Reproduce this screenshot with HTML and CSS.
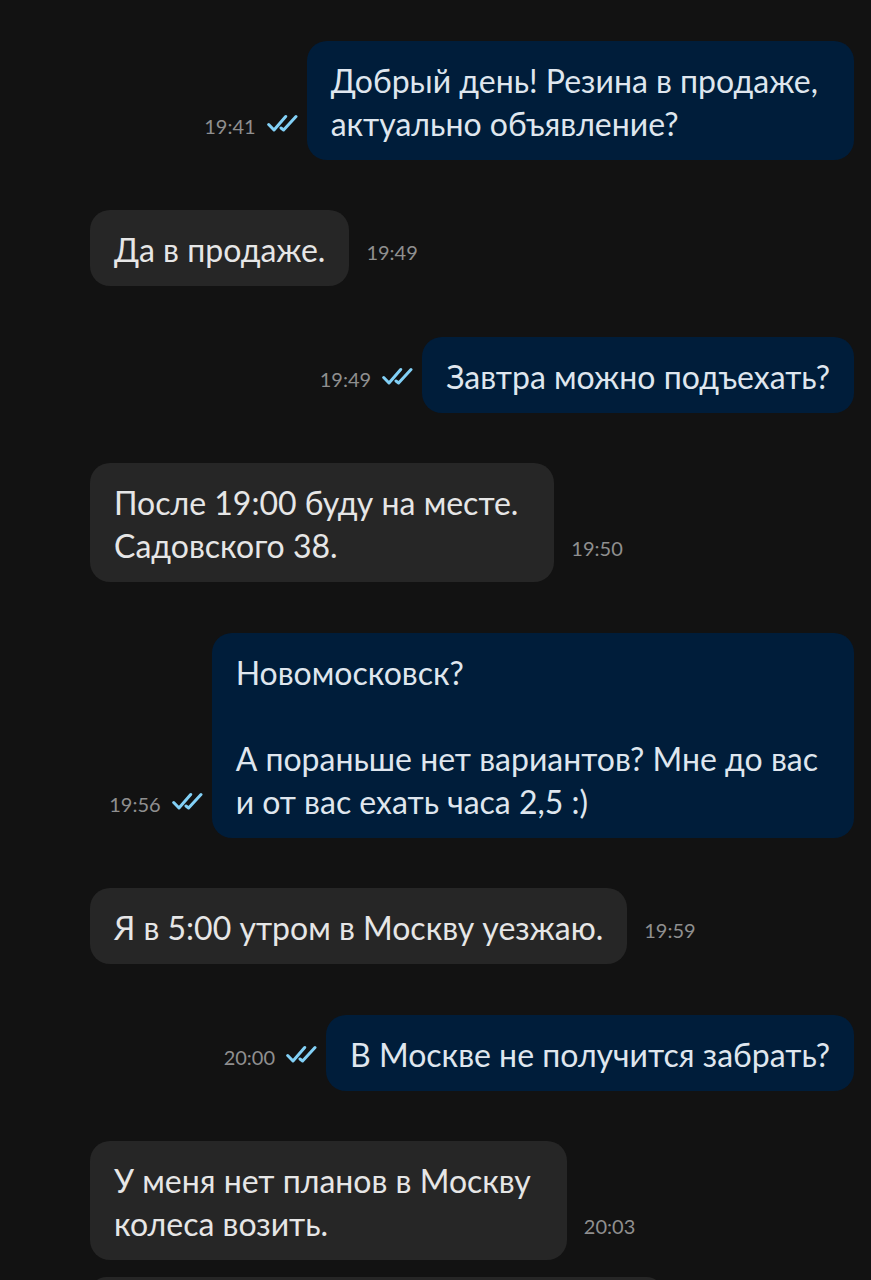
FILE: index.html
```html
<!DOCTYPE html>
<html lang="ru">
<head>
    <meta charset="UTF-8">
    <meta name="viewport" content="width=device-width, initial-scale=1.0">
    <title>Чат</title>
    <link rel="stylesheet" href="styles.css">
</head>
<body>
    <svg class="sprite" aria-hidden="true">
        <symbol id="read" viewBox="0 0 32 18">
            <path d="M2.7 10.5L8 16L19.7 2.5M15 14L17.6 16L30 2.5"/>
        </symbol>
    </svg>

    <main class="chat">
        <div class="message outgoing">
            <div class="meta"><time>19:41</time><svg class="read"><use href="#read"/></svg></div>
            <p class="bubble multiline">Добрый день! Резина в продаже,<br>актуально объявление?</p>
        </div>
        <div class="message incoming">
            <p class="bubble">Да в продаже.</p>
            <div class="meta"><time>19:49</time></div>
        </div>
        <div class="message outgoing">
            <div class="meta"><time>19:49</time><svg class="read"><use href="#read"/></svg></div>
            <p class="bubble">Завтра можно подъехать?</p>
        </div>
        <div class="message incoming">
            <p class="bubble multiline">После 19:00 буду на месте.<br>Садовского 38.</p>
            <div class="meta"><time>19:50</time></div>
        </div>
        <div class="message outgoing">
            <div class="meta"><time>19:56</time><svg class="read"><use href="#read"/></svg></div>
            <p class="bubble multiline">Новомосковск?<br><br>А пораньше нет вариантов? Мне до вас<br>и от вас ехать часа 2,5 :)</p>
        </div>
        <div class="message incoming">
            <p class="bubble">Я в 5:00 утром в Москву уезжаю.</p>
            <div class="meta"><time>19:59</time></div>
        </div>
        <div class="message outgoing">
            <div class="meta"><time>20:00</time><svg class="read"><use href="#read"/></svg></div>
            <p class="bubble">В Москве не получится забрать?</p>
        </div>
        <div class="message incoming">
            <p class="bubble multiline">У меня нет планов в Москву<br>колеса возить.</p>
            <div class="meta"><time>20:03</time></div>
        </div>
        <div class="message incoming next">
            <p class="bubble"></p>
        </div>
    </main>
</body>
</html>
```
FILE: styles.css
```css
* {
    margin: 0;
    padding: 0;
    box-sizing: border-box;
}

body {
    background: #121212;
    font-family: Lato, 'Noto Sans', sans-serif;
}

.sprite {
    display: none;
}

.chat {
    display: flex;
    flex-direction: column;
    height: 100vh;
    overflow: hidden;
    padding: 41px 17px 0 90px;
}

.message {
    display: flex;
    flex-shrink: 0;
    align-items: flex-end;
}

.incoming {
    margin-top: 50px;
}

.outgoing {
    justify-content: flex-end;
    margin-top: 51px;
}

.message:first-child {
    margin-top: 0;
}

.bubble {
    padding: 18px 24px 15px;
    border-radius: 20px;
    font-size: 32px;
    line-height: 43px;
}

.bubble.multiline {
    padding-right: 36px;
}

.incoming .bubble {
    background: #262626;
    color: #e6e6e6;
}

.outgoing .bubble {
    background: #001d3a;
    color: #dfe6ee;
}

/* сообщение того же автора, идёт вплотную к предыдущему */
.incoming.next {
    margin-top: 17px;
}

.next .bubble {
    width: 75%;
}

.meta {
    display: flex;
    align-items: flex-start;
    gap: 10px;
    color: #8f8f8f;
    font-size: 20px;
    line-height: 24px;
    padding: 0 9px 22px 17px;
}

.read {
    width: 32px;
    height: 18px;
    fill: none;
    stroke: #82d0f6;
    stroke-width: 3;
    stroke-linecap: round;
    stroke-linejoin: round;
}
```
